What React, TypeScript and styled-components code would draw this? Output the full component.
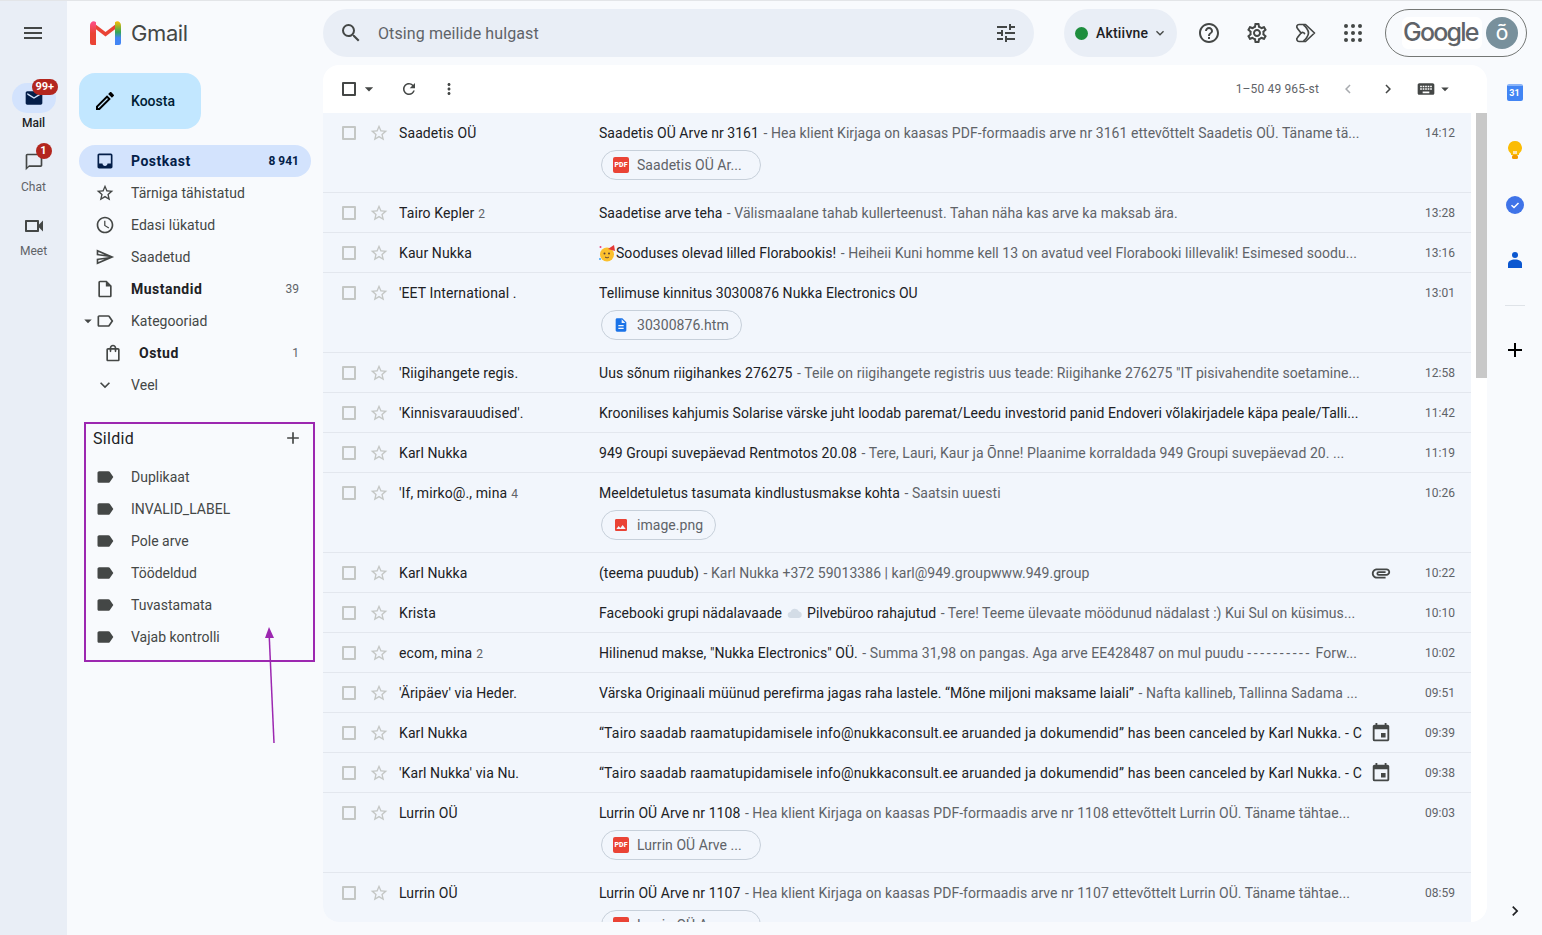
import React from 'react';
import styled, { createGlobalStyle } from 'styled-components';
import {
  MdAdd,
  MdArrowDropDown,
  MdAttachment,
  MdChevronLeft,
  MdChevronRight,
  MdDescription,
  MdEvent,
  MdExpandMore,
  MdImage,
  MdInbox,
  MdKeyboard,
  MdLabel,
  MdMail,
  MdMenu,
  MdMoreVert,
  MdOutlineChatBubbleOutline,
  MdOutlineEdit,
  MdOutlineHelpOutline,
  MdOutlineInsertDriveFile,
  MdOutlineLabel,
  MdOutlineSchedule,
  MdOutlineSend,
  MdOutlineSettings,
  MdOutlineShoppingBag,
  MdOutlineStarBorder,
  MdOutlineVideocam,
  MdRefresh,
  MdSearch,
  MdTune,
} from 'react-icons/md';

const GlobalStyle = createGlobalStyle`
  * { box-sizing: border-box; }
  html, body { margin: 0; height: 100%; overflow: hidden; }
  body {
    background: #f8fafd;
    color: #202124;
    font-family: Roboto, "Noto Sans", Arial, sans-serif;
    font-size: 14px;
  }
`;

const Page = styled.div`
  position: relative;
  display: flex;
  width: 1542px;
  height: 935px;
  overflow: hidden;
  border-top: 1px solid #e3e5e8;
`;

/* left rail */
const Rail = styled.aside`
  width: 67px;
  flex: none;
  background: #e9eef6;
  display: flex;
  flex-direction: column;
  align-items: center;
  padding-top: 20px;
`;

const MenuButton = styled.div`
  height: 24px;
  margin: 0 1px 38px 0;
  color: #444746;
  font-size: 24px;
  display: flex;
`;

const RailItem = styled.div`
  width: 44px;
  height: 64px;
  display: flex;
  flex-direction: column;
  align-items: center;
`;

const RailIcon = styled.div<{ $active?: boolean; $size?: number }>`
  position: relative;
  width: 44px;
  height: 30px;
  border-radius: 15px;
  background: ${p => (p.$active ? '#d3e3fd' : 'transparent')};
  color: ${p => (p.$active ? '#041e49' : '#444746')};
  font-size: ${p => p.$size ?? 20}px;
  display: flex;
  align-items: center;
  justify-content: center;
`;

const RailLabel = styled.span<{ $active?: boolean }>`
  margin-top: 2px;
  font-size: 12px;
  line-height: 16px;
  color: ${p => (p.$active ? '#202124' : '#5f6368')};
  font-weight: ${p => (p.$active ? 500 : 400)};
`;

const RailBadge = styled.span<{ $wide?: boolean }>`
  position: absolute;
  top: -4px;
  left: ${p => (p.$wide ? '20px' : '24px')};
  min-width: 16px;
  height: 16px;
  padding: 0 ${p => (p.$wide ? '4px' : '0')};
  border-radius: 8px;
  background: #b3261e;
  color: #fff;
  font-size: 11px;
  font-weight: 700;
  line-height: 16px;
  text-align: center;
`;

/* header */
const Column = styled.div`
  flex: 1;
  min-width: 0;
  display: flex;
  flex-direction: column;
`;

const Header = styled.header`
  height: 64px;
  flex: none;
  display: flex;
  align-items: center;
`;

const Brand = styled.div`
  width: 256px;
  flex: none;
  padding-left: 23px;
  display: flex;
  align-items: center;
  gap: 10px;
`;

const BrandName = styled.span`
  font-family: Inter, Roboto, sans-serif;
  font-size: 22px;
  letter-spacing: -0.4px;
  color: #444746;
`;

const SearchBar = styled.div`
  width: 711px;
  height: 48px;
  flex: none;
  border-radius: 24px;
  background: #e9eef6;
  display: flex;
  align-items: center;
  padding: 0 16px;
  color: #444746;
  font-size: 24px;
`;

const SearchText = styled.span`
  flex: 1;
  margin-left: 15px;
  font-size: 16px;
  letter-spacing: 0.1px;
  color: #5f6368;
`;

const StatusPill = styled.div`
  width: 113px;
  height: 48px;
  flex: none;
  margin: 0 8px 0 30px;
  border-radius: 24px;
  background: #e9eef6;
  display: flex;
  align-items: center;
  padding-left: 11px;
  font-weight: 500;
  letter-spacing: 0.2px;
  color: #202124;
`;

const StatusDot = styled.span`
  width: 13px;
  height: 13px;
  margin-right: 8px;
  border-radius: 50%;
  background: #1e8e3e;
`;

const StatusChevron = styled.span`
  margin-left: 4px;
  font-size: 16px;
  display: flex;
  color: #444746;
`;

const HeaderIcon = styled.div`
  width: 48px;
  height: 48px;
  flex: none;
  display: flex;
  align-items: center;
  justify-content: center;
  color: #444746;
  font-size: 24px;
`;

const AccountPill = styled.div`
  width: 142px;
  height: 48px;
  flex: none;
  margin-left: 8px;
  border: 1px solid #747775;
  border-radius: 24px;
  display: flex;
  align-items: center;
  padding-left: 16px;
`;

const GoogleWord = styled.span`
  width: 80px;
  height: 32px;
  margin-right: 4px;
  padding-left: 1px;
  border-radius: 6px;
  background: #fff;
  font-family: Inter, Roboto, sans-serif;
  font-size: 25px;
  font-weight: 500;
  line-height: 30px;
  letter-spacing: -1.8px;
  color: #5f6368;
`;

const Avatar = styled.span`
  width: 32px;
  height: 32px;
  border-radius: 50%;
  background: #78909c;
  color: #fff;
  font-size: 22px;
  line-height: 32px;
  text-align: center;
`;

/* body */
const Body = styled.div`
  flex: 1;
  min-height: 0;
  display: flex;
`;

const Sidebar = styled.nav`
  width: 256px;
  flex: none;
  padding-top: 8px;
`;

const Compose = styled.div`
  width: 122px;
  height: 56px;
  margin: 0 0 16px 12px;
  border-radius: 16px;
  background: #c2e7ff;
  display: flex;
  align-items: center;
  padding-left: 14px;
  color: #001d35;
  font-weight: 500;
  font-size: 14px;
  gap: 14px;
`;

const ComposeIcon = styled.span`
  font-size: 24px;
  display: flex;
  color: #000;
`;

const NavRow = styled.div<{ $active?: boolean; $indent?: boolean; $bold?: boolean }>`
  position: relative;
  width: 232px;
  height: 32px;
  margin-left: 12px;
  padding: 0 12px 0 ${p => (p.$indent ? '24px' : '16px')};
  border-radius: 16px;
  display: flex;
  align-items: center;
  background: ${p => (p.$active ? '#d3e3fd' : 'transparent')};
  color: ${p => (p.$active ? '#041e49' : p.$bold ? '#202124' : '#444746')};
  font-weight: ${p => (p.$active || p.$bold ? 700 : 400)};
`;

const NavIcon = styled.span<{ $active?: boolean }>`
  width: 20px;
  margin-right: 16px;
  flex: none;
  display: flex;
  justify-content: center;
  font-size: 20px;
  color: ${p => (p.$active ? '#041e49' : '#444746')};
`;

const NavLabel = styled.span<{ $bold?: boolean }>`
  flex: 1;
  white-space: nowrap;
  letter-spacing: ${p => (p.$bold ? '0.5px' : '0.05px')};
`;

const NavCount = styled.span<{ $active?: boolean }>`
  font-size: 12px;
  font-weight: ${p => (p.$active ? 700 : 400)};
  color: ${p => (p.$active ? '#041e49' : '#5f6368')};
`;

const TreeArrow = styled.span`
  position: absolute;
  left: 0;
  top: 7px;
  font-size: 18px;
  display: flex;
  color: #444746;
`;

const LabelsBox = styled.section`
  width: 231px;
  height: 240px;
  margin: 21px 0 0 17px;
  border: 2px solid #9c27b0;
`;

const LabelsHead = styled.div`
  height: 37px;
  padding: 0 11px 9px 7px;
  display: flex;
  align-items: center;
  justify-content: space-between;
  font-size: 16px;
  letter-spacing: 0.3px;
  color: #202124;
`;

const AddIcon = styled.span`
  margin-right: -1px;
  font-size: 20px;
  display: flex;
  color: #444746;
`;

const LabelRow = styled.div`
  height: 32px;
  padding-left: 9px;
  display: flex;
  align-items: center;
  color: #444746;
`;

const Annotation = styled.svg`
  position: absolute;
  left: 256px;
  top: 620px;
`;

/* mail list */
const Card = styled.main`
  width: 1164px;
  height: 857px;
  flex: none;
  border-radius: 16px;
  background: #fff;
  display: flex;
  flex-direction: column;
  overflow: hidden;
`;

const Toolbar = styled.div`
  height: 48px;
  flex: none;
  padding-left: 19px;
  display: flex;
  align-items: center;
`;

const ToolIcon = styled.span<{ $width?: number; $size?: number; $muted?: boolean; $after?: number }>`
  width: ${p => p.$width ?? 40}px;
  margin-right: ${p => p.$after ?? 0}px;
  flex: none;
  display: flex;
  justify-content: center;
  font-size: ${p => p.$size ?? 18}px;
  color: ${p => (p.$muted ? '#a8abaf' : '#444746')};
`;

const RangeText = styled.span`
  margin: 0 9px 0 auto;
  font-size: 12px;
  letter-spacing: 0.15px;
  color: #5f6368;
`;

const ListArea = styled.div`
  flex: 1;
  min-height: 0;
  display: flex;
`;

const MailList = styled.div`
  width: 1148px;
  flex: none;
  overflow: hidden;
  background: #f2f6fc;
`;

const ScrollTrack = styled.div`
  width: 11px;
  margin-left: 5px;
  flex: none;
`;

const ScrollThumb = styled.div`
  height: 265px;
  background: #c8c8c8;
`;

const MailRow = styled.div`
  padding: 10px 16px 9px 19px;
  border-bottom: 1px solid #e3e7ee;
`;

const MailLine = styled.div`
  height: 20px;
  display: flex;
  align-items: center;
`;

const CheckBox = styled.span<{ $dark?: boolean }>`
  width: 14px;
  height: 14px;
  flex: none;
  border: 2px solid ${p => (p.$dark ? '#444746' : '#c4c7c5')};
  border-radius: 1px;
  display: block;
`;

const StarIcon = styled.span`
  width: 20px;
  margin: 0 10px 0 13px;
  flex: none;
  display: flex;
  font-size: 20px;
  color: #c4c7c5;
`;

const Sender = styled.span`
  width: 200px;
  flex: none;
  white-space: nowrap;
  overflow: hidden;
  letter-spacing: 0.1px;
`;

const ThreadCount = styled.span`
  margin-left: 4px;
  font-size: 12px;
  color: #5f6368;
`;

const Subject = styled.span<{ $loose?: boolean }>`
  flex: 1;
  min-width: 0;
  display: flex;
  align-items: center;
  white-space: pre;
  overflow: hidden;
  letter-spacing: ${p => (p.$loose ? '0.16px' : '0.05px')};
`;

const Snippet = styled.span`
  margin-left: 1px;
  color: #5f6368;
`;

const Dashes = styled.span`
  letter-spacing: 2.6px;
`;

const CloudSlot = styled.span`
  margin: 0 4px 0 5px;
  display: flex;
`;

const RowEnd = styled.span`
  width: 93px;
  flex: none;
  padding-left: 10px;
  display: flex;
  align-items: center;
`;

const RowIcon = styled.span`
  font-size: 22px;
  display: flex;
  margin-left: -2px;
  color: #444746;
`;

const Time = styled.span`
  margin-left: auto;
  font-size: 12px;
  color: #5f6368;
`;

const Chips = styled.div`
  margin: 7px 0 3px 259px;
`;

const Chip = styled.div<{ $wide?: boolean }>`
  display: inline-flex;
  align-items: center;
  height: 30px;
  width: ${p => (p.$wide ? '160px' : 'auto')};
  padding: 0 12px 0 11px;
  border: 1px solid #c7d0da;
  border-radius: 15px;
  color: #5f6368;
  white-space: nowrap;
  letter-spacing: 0.05px;
`;

const ChipIcon = styled.span<{ $color: string }>`
  width: 16px;
  height: 16px;
  margin-right: 8px;
  flex: none;
  display: flex;
  align-items: center;
  justify-content: center;
  font-size: 22px;
  color: ${p => p.$color};
`;

const PdfMark = styled.span`
  width: 16px;
  height: 16px;
  margin-right: 8px;
  flex: none;
  border-radius: 2px;
  background: #ea4335;
  color: #fff;
  font-size: 7px;
  font-weight: 900;
  line-height: 16px;
  text-align: center;
`;

/* right panel */
const SidePanel = styled.aside`
  flex: 1;
  display: flex;
  flex-direction: column;
  align-items: center;
  padding-top: 19px;
`;

const PanelIcon = styled.div`
  height: 56px;
  display: flex;
  align-items: flex-start;
  justify-content: center;
`;

const CalendarMark = styled.span`
  width: 16px;
  height: 17px;
  border-radius: 2px;
  background: #4285f4;
  border-top: 2px solid #8ab4f8;
  color: #fff;
  font-size: 9px;
  font-weight: 700;
  line-height: 15px;
  text-align: center;
`;

const PanelRule = styled.div`
  width: 20px;
  height: 1px;
  margin-top: -3px;
  background: #dfe3e8;
`;

const PanelAdd = styled.div`
  margin-top: 32px;
  font-size: 24px;
  display: flex;
  color: #000;
`;

const PanelFoot = styled.div`
  margin-top: auto;
  margin-bottom: 14px;
  font-size: 20px;
  display: flex;
  color: #202124;
`;

const GmailLogo = () => (
  <svg width="31" height="25" viewBox="0 0 31 25">
    <defs>
      <linearGradient id="gmailRight" x1="0" y1="0" x2="0" y2="1">
        <stop offset="0" stopColor="#fbbc04" />
        <stop offset="0.45" stopColor="#34a853" />
        <stop offset="0.7" stopColor="#4285f4" />
      </linearGradient>
      <linearGradient id="gmailLeft" x1="0" y1="0" x2="0" y2="1">
        <stop offset="0" stopColor="#ff4f8b" />
        <stop offset="0.5" stopColor="#ea4335" />
      </linearGradient>
    </defs>
    <path d="M15.500 15.500 5 7.500V3L15.500 11 26 3v4.500z" fill="#ea4335" />
    <path d="M0 4.500C0 1 3.500-.8 6 1.200V24H2a2 2 0 0 1-2-2z" fill="url(#gmailLeft)" />
    <path d="M31 4.500c0-3.500-3.500-5.300-6-3.300V24h4a2 2 0 0 0 2-2z" fill="url(#gmailRight)" />
  </svg>
);

const GemIcon = () => (
  <svg width="24" height="24" viewBox="0 0 24 24" fill="none" stroke="#444746" strokeWidth="1.700" strokeLinejoin="round" strokeLinecap="round">
    <path d="M6 3.500h6.500L21.500 12l-9 8.500H6c-2 0-3-2.500-1.500-4L8 12 4.500 7.500C3 5.500 4 3.500 6 3.500z" />
    <path d="M11 4.500c1 .5 4.500 4.500 4.500 7.500S12 19 11 19.500" />
    <path d="M8 12c1.500-1 3-.5 3.500.5" />
  </svg>
);

const NineDots = () => (
  <svg width="24" height="24" viewBox="0 0 24 24" fill="#444746">
    {[5, 12, 19].flatMap(y => [5, 12, 19].map(x => <circle key={`${x}-${y}`} cx={x} cy={y} r="2" />))}
  </svg>
);

const PartyFace = () => (
  <svg width="17" height="18" viewBox="0 0 17 18">
    <circle cx="8" cy="10.500" r="7" fill="#fbc02d" />
    <path d="M9 5l6-4 1 6z" fill="#e53935" />
    <circle cx="5.500" cy="9.500" r="1" fill="#5d4037" />
    <circle cx="10" cy="9.500" r="1" fill="#5d4037" />
    <path d="M6 13c1.500 1 3 1 4 0" stroke="#5d4037" fill="none" />
    <circle cx="1.500" cy="3" r="1" fill="#ec407a" />
    <circle cx="1" cy="15" r="1" fill="#42a5f5" />
  </svg>
);

const CloudMark = () => (
  <svg width="16" height="12" viewBox="0 0 16 12">
    <path d="M4 11a3 3 0 0 1-.5-6A4.500 4.500 0 0 1 12 4.500a3.300 3.300 0 0 1 0 6.500z" fill="#d3dce6" />
  </svg>
);

const BulbMark = () => (
  <svg width="16" height="20" viewBox="0 0 16 20">
    <path d="M8 1a7 7 0 0 0-4 12.700V15h8v-1.300A7 7 0 0 0 8 1z" fill="#fbbc04" />
    <rect x="5" y="15" width="6" height="4" rx="1.500" fill="#f29900" />
    <rect x="6" y="11" width="4" height="3" fill="#fde5b0" />
  </svg>
);

const TasksMark = () => (
  <svg width="18" height="18" viewBox="0 0 18 18">
    <circle cx="9" cy="9" r="9" fill="#3f73e8" />
    <path d="M5.500 9.200 8 11.500l4.500-4.500" stroke="#fff" strokeWidth="1.500" fill="none" />
  </svg>
);

const PersonMark = () => (
  <svg width="14" height="16" viewBox="0 0 14 16">
    <circle cx="7" cy="3" r="3" fill="#0b57d0" />
    <path d="M0 16v-4c0-3 3-4.500 7-4.500s7 1.500 7 4.500v4z" fill="#0b57d0" />
  </svg>
);

type Attachment = { kind: 'pdf' | 'doc' | 'image'; name: string };

type Mail = {
  sender: string;
  count?: number;
  subject: string;
  extra?: string;
  snippet?: React.ReactNode;
  time: string;
  emoji?: boolean;
  clip?: boolean;
  event?: boolean;
  attachment?: Attachment;
};

const mails: Mail[] = [
  { sender: 'Saadetis OÜ', subject: 'Saadetis OÜ Arve nr 3161', snippet: 'Hea klient Kirjaga on kaasas PDF-formaadis arve nr 3161 ettevõttelt Saadetis OÜ. Täname tä...', time: '14:12', attachment: { kind: 'pdf', name: 'Saadetis OÜ Ar...' } },
  { sender: 'Tairo Kepler', count: 2, subject: 'Saadetise arve teha', snippet: 'Välismaalane tahab kullerteenust. Tahan näha kas arve ka maksab ära.', time: '13:28' },
  { sender: 'Kaur Nukka', emoji: true, subject: 'Sooduses olevad lilled Florabookis!', snippet: 'Heiheii Kuni homme kell 13 on avatud veel Florabooki lillevalik! Esimesed soodu...', time: '13:16' },
  { sender: "'EET International .", subject: 'Tellimuse kinnitus 30300876 Nukka Electronics OU', time: '13:01', attachment: { kind: 'doc', name: '30300876.htm' } },
  { sender: "'Riigihangete regis.", subject: 'Uus sõnum riigihankes 276275', snippet: 'Teile on riigihangete registris uus teade: Riigihanke 276275 "IT pisivahendite soetamine...', time: '12:58' },
  { sender: "'Kinnisvarauudised'.", subject: 'Kroonilises kahjumis Solarise värske juht loodab paremat/Leedu investorid panid Endoveri võlakirjadele käpa peale/Talli...', time: '11:42' },
  { sender: 'Karl Nukka', subject: '949 Groupi suvepäevad Rentmotos 20.08', snippet: 'Tere, Lauri, Kaur ja Õnne! Plaanime korraldada 949 Groupi suvepäevad 20. ...', time: '11:19' },
  { sender: "'If, mirko@., mina", count: 4, subject: 'Meeldetuletus tasumata kindlustusmakse kohta', snippet: 'Saatsin uuesti', time: '10:26', attachment: { kind: 'image', name: 'image.png' } },
  { sender: 'Karl Nukka', subject: '(teema puudub)', snippet: 'Karl Nukka +372 59013386 | karl@949.groupwww.949.group', time: '10:22', clip: true },
  { sender: 'Krista', subject: 'Facebooki grupi nädalavaade', extra: 'Pilvebüroo rahajutud', snippet: 'Tere! Teeme ülevaate möödunud nädalast :) Kui Sul on küsimus...', time: '10:10' },
  { sender: 'ecom, mina', count: 2, subject: 'Hilinenud makse, "Nukka Electronics" OÜ.', snippet: <>Summa 31,98 on pangas. Aga arve EE428487 on mul puudu <Dashes>----------</Dashes> Forw...</>, time: '10:02' },
  { sender: "'Äripäev' via Heder.", subject: 'Värska Originaali müünud perefirma jagas raha lastele. “Mõne miljoni maksame laiali”', snippet: 'Nafta kallineb, Tallinna Sadama ...', time: '09:51' },
  { sender: 'Karl Nukka', subject: '“Tairo saadab raamatupidamisele info@nukkaconsult.ee aruanded ja dokumendid” has been canceled by Karl Nukka. - C', time: '09:39', event: true },
  { sender: "'Karl Nukka' via Nu.", subject: '“Tairo saadab raamatupidamisele info@nukkaconsult.ee aruanded ja dokumendid” has been canceled by Karl Nukka. - C', time: '09:38', event: true },
  { sender: 'Lurrin OÜ', subject: 'Lurrin OÜ Arve nr 1108', snippet: 'Hea klient Kirjaga on kaasas PDF-formaadis arve nr 1108 ettevõttelt Lurrin OÜ. Täname tähtae...', time: '09:03', attachment: { kind: 'pdf', name: 'Lurrin OÜ Arve ...' } },
  { sender: 'Lurrin OÜ', subject: 'Lurrin OÜ Arve nr 1107', snippet: 'Hea klient Kirjaga on kaasas PDF-formaadis arve nr 1107 ettevõttelt Lurrin OÜ. Täname tähtae...', time: '08:59', attachment: { kind: 'pdf', name: 'Lurrin OÜ Arve ...' } },
];

const labels = ['Duplikaat', 'INVALID_LABEL', 'Pole arve', 'Töödeldud', 'Tuvastamata', 'Vajab kontrolli'];

const AttachmentChip = ({ file }: { file: Attachment }) => (
  <Chip $wide={file.kind === 'pdf'}>
    {file.kind === 'pdf' && <PdfMark>PDF</PdfMark>}
    {file.kind === 'doc' && <ChipIcon $color="#1a73e8"><MdDescription /></ChipIcon>}
    {file.kind === 'image' && <ChipIcon $color="#ea4335"><MdImage /></ChipIcon>}
    {file.name}
  </Chip>
);

const MailItem = ({ mail }: { mail: Mail }) => (
  <MailRow>
    <MailLine>
      <CheckBox />
      <StarIcon><MdOutlineStarBorder /></StarIcon>
      <Sender>
        {mail.sender}
        {mail.count && <ThreadCount>{mail.count}</ThreadCount>}
      </Sender>
      <Subject $loose={mail.event}>
        {mail.emoji && <PartyFace />}
        {mail.subject}
        {mail.extra && (
          <>
            <CloudSlot><CloudMark /></CloudSlot>
            {mail.extra}
          </>
        )}
        {mail.snippet && <Snippet> - {mail.snippet}</Snippet>}
      </Subject>
      <RowEnd>
        {mail.clip && <RowIcon><MdAttachment /></RowIcon>}
        {mail.event && <RowIcon><MdEvent /></RowIcon>}
        <Time>{mail.time}</Time>
      </RowEnd>
    </MailLine>
    {mail.attachment && (
      <Chips>
        <AttachmentChip file={mail.attachment} />
      </Chips>
    )}
  </MailRow>
);

export default function App() {
  return (
    <Page>
      <GlobalStyle />
      <Rail>
        <MenuButton><MdMenu /></MenuButton>
        <RailItem>
          <RailIcon $active>
            <MdMail />
            <RailBadge $wide>99+</RailBadge>
          </RailIcon>
          <RailLabel $active>Mail</RailLabel>
        </RailItem>
        <RailItem>
          <RailIcon>
            <MdOutlineChatBubbleOutline />
            <RailBadge>1</RailBadge>
          </RailIcon>
          <RailLabel>Chat</RailLabel>
        </RailItem>
        <RailItem>
          <RailIcon $size={24}><MdOutlineVideocam /></RailIcon>
          <RailLabel>Meet</RailLabel>
        </RailItem>
      </Rail>

      <Column>
        <Header>
          <Brand>
            <GmailLogo />
            <BrandName>Gmail</BrandName>
          </Brand>
          <SearchBar>
            <MdSearch />
            <SearchText>Otsing meilide hulgast</SearchText>
            <MdTune />
          </SearchBar>
          <StatusPill>
            <StatusDot />
            Aktiivne
            <StatusChevron><MdExpandMore /></StatusChevron>
          </StatusPill>
          <HeaderIcon><MdOutlineHelpOutline /></HeaderIcon>
          <HeaderIcon><MdOutlineSettings /></HeaderIcon>
          <HeaderIcon><GemIcon /></HeaderIcon>
          <HeaderIcon><NineDots /></HeaderIcon>
          <AccountPill>
            <GoogleWord>Google</GoogleWord>
            <Avatar>õ</Avatar>
          </AccountPill>
        </Header>

        <Body>
          <Sidebar>
            <Compose>
              <ComposeIcon><MdOutlineEdit /></ComposeIcon>
              Koosta
            </Compose>
            <NavRow $active>
              <NavIcon $active><MdInbox /></NavIcon>
              <NavLabel $bold>Postkast</NavLabel>
              <NavCount $active>8 941</NavCount>
            </NavRow>
            <NavRow>
              <NavIcon><MdOutlineStarBorder /></NavIcon>
              <NavLabel>Tärniga tähistatud</NavLabel>
            </NavRow>
            <NavRow>
              <NavIcon><MdOutlineSchedule /></NavIcon>
              <NavLabel>Edasi lükatud</NavLabel>
            </NavRow>
            <NavRow>
              <NavIcon><MdOutlineSend /></NavIcon>
              <NavLabel>Saadetud</NavLabel>
            </NavRow>
            <NavRow $bold>
              <NavIcon><MdOutlineInsertDriveFile /></NavIcon>
              <NavLabel $bold>Mustandid</NavLabel>
              <NavCount>39</NavCount>
            </NavRow>
            <NavRow>
              <TreeArrow><MdArrowDropDown /></TreeArrow>
              <NavIcon><MdOutlineLabel /></NavIcon>
              <NavLabel>Kategooriad</NavLabel>
            </NavRow>
            <NavRow $bold $indent>
              <NavIcon><MdOutlineShoppingBag /></NavIcon>
              <NavLabel $bold>Ostud</NavLabel>
              <NavCount>1</NavCount>
            </NavRow>
            <NavRow>
              <NavIcon><MdExpandMore /></NavIcon>
              <NavLabel>Veel</NavLabel>
            </NavRow>
            <LabelsBox>
              <LabelsHead>
                Sildid
                <AddIcon><MdAdd /></AddIcon>
              </LabelsHead>
              {labels.map(label => (
                <LabelRow key={label}>
                  <NavIcon><MdLabel /></NavIcon>
                  {label}
                </LabelRow>
              ))}
            </LabelsBox>
          </Sidebar>

          <Card>
            <Toolbar>
              <CheckBox $dark />
              <ToolIcon $width={26} $size={20} $after={7}><MdArrowDropDown /></ToolIcon>
              <ToolIcon><MdRefresh /></ToolIcon>
              <ToolIcon><MdMoreVert /></ToolIcon>
              <RangeText>1–50 49 965-st</RangeText>
              <ToolIcon $muted><MdChevronLeft /></ToolIcon>
              <ToolIcon $after={8}><MdChevronRight /></ToolIcon>
              <ToolIcon $width={20} $size={20}><MdKeyboard /></ToolIcon>
              <ToolIcon $width={18} $size={18} $after={33}><MdArrowDropDown /></ToolIcon>
            </Toolbar>
            <ListArea>
              <MailList>
                {mails.map((mail, i) => (
                  <MailItem key={i} mail={mail} />
                ))}
              </MailList>
              <ScrollTrack>
                <ScrollThumb />
              </ScrollTrack>
            </ListArea>
          </Card>

          <SidePanel>
            <PanelIcon><CalendarMark>31</CalendarMark></PanelIcon>
            <PanelIcon><BulbMark /></PanelIcon>
            <PanelIcon><TasksMark /></PanelIcon>
            <PanelIcon><PersonMark /></PanelIcon>
            <PanelRule />
            <PanelAdd><MdAdd /></PanelAdd>
            <PanelFoot><MdChevronRight /></PanelFoot>
          </SidePanel>
        </Body>
      </Column>

      <Annotation width="24" height="126" viewBox="0 0 24 126">
        <path d="M18 122 13 10" stroke="#9c27b0" strokeWidth="1.500" fill="none" />
        <path d="M13 6 9 17h9z" fill="#9c27b0" />
      </Annotation>
    </Page>
  );
}
